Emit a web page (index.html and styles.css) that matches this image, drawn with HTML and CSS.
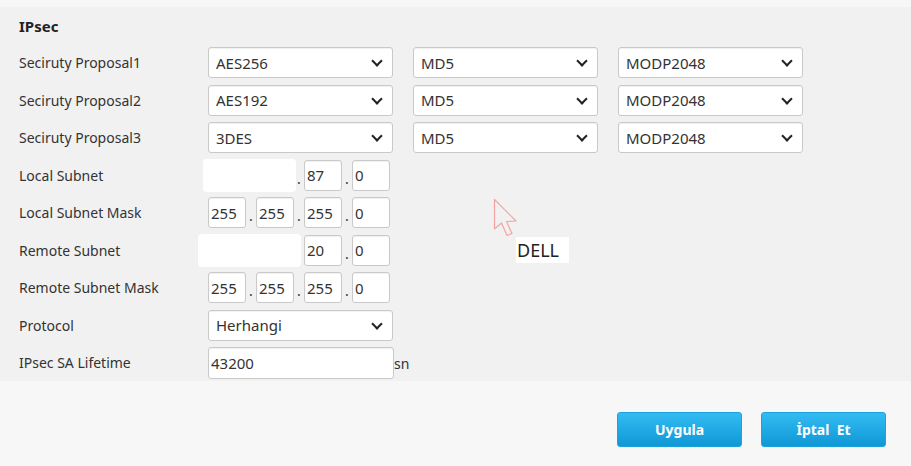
FILE: index.html
```html
<!DOCTYPE html>
<html lang="tr">
<head>
  <meta charset="UTF-8">
  <title>IPsec</title>
  <link rel="stylesheet" href="styles.css">
</head>
<body>
  <div class="panel">
    <h3 class="title">IPsec</h3>

    <div class="row">
      <span class="label">Seciruty Proposal1</span>
      <span class="sel"><select><option>AES256</option></select></span>
      <span class="sel"><select><option>MD5</option></select></span>
      <span class="sel"><select><option>MODP2048</option></select></span>
    </div>
    <div class="row">
      <span class="label">Seciruty Proposal2</span>
      <span class="sel"><select><option>AES192</option></select></span>
      <span class="sel"><select><option>MD5</option></select></span>
      <span class="sel"><select><option>MODP2048</option></select></span>
    </div>
    <div class="row">
      <span class="label">Seciruty Proposal3</span>
      <span class="sel"><select><option>3DES</option></select></span>
      <span class="sel"><select><option>MD5</option></select></span>
      <span class="sel"><select><option>MODP2048</option></select></span>
    </div>

    <div class="row">
      <span class="label">Local Subnet</span>
      <span class="ip">
        <input type="text" value=""><i>.</i><input type="text" value=""><i>.</i><input type="text" value="87"><i>.</i><input type="text" value="0">
        <span class="hide local"></span>
      </span>
    </div>
    <div class="row">
      <span class="label">Local Subnet Mask</span>
      <span class="ip">
        <input type="text" value="255"><i>.</i><input type="text" value="255"><i>.</i><input type="text" value="255"><i>.</i><input type="text" value="0">
      </span>
      <span class="cursor">
        <svg width="26" height="40" viewBox="0 0 26 40">
          <path d="M1.5 1.5 L1.5 31 L8.5 25 L14 37.5 L19 35.5 L13.5 23.5 L23 23 Z" fill="none" stroke="#f4a3a3" stroke-width="1.2" stroke-linejoin="round"/>
        </svg>
      </span>
    </div>
    <div class="row">
      <span class="label">Remote Subnet</span>
      <span class="ip">
        <input type="text" value=""><i>.</i><input type="text" value=""><i>.</i><input type="text" value="20"><i>.</i><input type="text" value="0">
        <span class="hide remote"></span>
      </span>
      <span class="tag">DELL</span>
    </div>
    <div class="row">
      <span class="label">Remote Subnet Mask</span>
      <span class="ip">
        <input type="text" value="255"><i>.</i><input type="text" value="255"><i>.</i><input type="text" value="255"><i>.</i><input type="text" value="0">
      </span>
    </div>

    <div class="row">
      <span class="label">Protocol</span>
      <span class="sel"><select><option>Herhangi</option></select></span>
    </div>
    <div class="row">
      <span class="label">IPsec SA Lifetime</span>
      <input class="life" type="text" value="43200"><span class="unit">sn</span>
    </div>
  </div>

  <div class="actions">
    <button class="btn">Uygula</button>
    <button class="btn">İptal&nbsp; Et</button>
  </div>
</body>
</html>
```

FILE: styles.css
```css
* {
  margin: 0;
  padding: 0;
  box-sizing: border-box;
}

body {
  background-color: #f7f7f7;
  font-family: "Noto Sans", "Open Sans", sans-serif;
  font-size: 14px;
  color: #333;
}

.panel {
  margin-top: 7px;
  height: 374px;
  background-color: #f1f1f1;
  padding-left: 19px;
}

.title {
  font-size: 15px;
  font-weight: bold;
  line-height: 38px;
  height: 37px;
  color: #222;
}

.row {
  display: flex;
  align-items: center;
  height: 37.5px;
  position: relative;
}

.label {
  width: 189px;
  flex: none;
}

.sel {
  position: relative;
  display: block;
  width: 185px;
  height: 31px;
  margin-right: 20px;
}

.sel::after {
  content: "";
  position: absolute;
  right: 12px;
  top: 10px;
  width: 6px;
  height: 6px;
  border-right: 2px solid #222;
  border-bottom: 2px solid #222;
  transform: rotate(45deg);
  pointer-events: none;
}

select, input {
  font-family: inherit;
  font-size: 15px;
  color: #333;
  background-color: #fff;
  border: 1px solid #c9c9c9;
  border-radius: 3px;
  box-shadow: inset 0 1px 1px rgba(0,0,0,0.06);
  outline: none;
}

select {
  appearance: none;
  -webkit-appearance: none;
  width: 100%;
  height: 100%;
  padding-left: 7px;
}

.ip {
  display: flex;
  align-items: flex-end;
  position: relative;
}

.ip input {
  width: 38px;
  height: 31px;
  padding-left: 2px;
}

.ip i {
  font-style: normal;
  width: 10px;
  text-align: center;
  line-height: 14px;
  padding-bottom: 5px;
}

.hide {
  position: absolute;
  background-color: #fff;
  border-radius: 4px;
  top: -1px;
  height: 33px;
}

.hide.local {
  left: -5px;
  width: 93px;
}

.hide.remote {
  left: -10px;
  width: 103px;
}

.cursor {
  position: absolute;
  left: 474px;
  top: 4px;
}

.tag {
  position: absolute;
  left: 497px;
  top: 5px;
  height: 26px;
  width: 53px;
  background-color: #fff;
  font-size: 18px;
  line-height: 27px;
  padding-left: 1px;
  color: #222;
}

.life {
  width: 186px;
  height: 32px;
  padding-left: 2px;
}

.unit {
  align-self: flex-end;
  margin-bottom: 9px;
}

.actions {
  display: flex;
  justify-content: flex-end;
  gap: 19px;
  padding: 31px 25px 0 0;
}

.btn {
  width: 125px;
  height: 35px;
  border: 1px solid #1aa3dd;
  border-radius: 3px;
  background: linear-gradient(#33bbf2, #0f98d6);
  color: #fff;
  font-family: inherit;
  font-size: 14px;
  font-weight: bold;
}
```
